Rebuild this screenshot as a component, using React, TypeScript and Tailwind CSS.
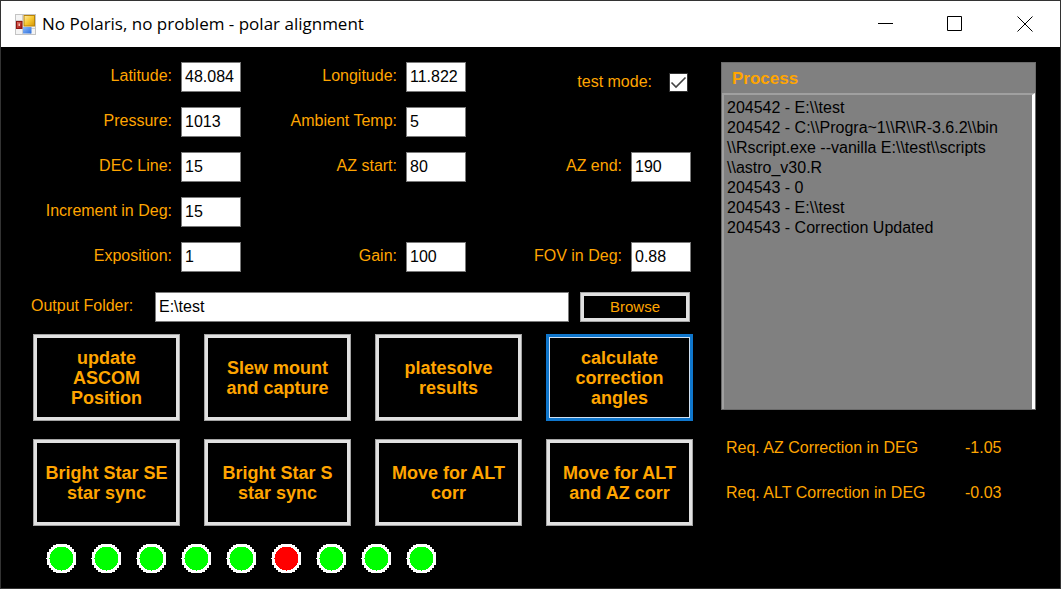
import { type ReactNode } from "react";

const LOG = [
  String.raw`204542 - E:\\test`,
  String.raw`204542 - C:\\Progra~1\\R\\R-3.6.2\\bin`,
  String.raw`\\Rscript.exe --vanilla E:\\test\\scripts`,
  String.raw`\\astro_v30.R`,
  "204543 - 0",
  String.raw`204543 - E:\\test`,
  "204543 - Correction Updated",
].join("\n");

const STATUS = ["ok", "ok", "ok", "ok", "ok", "fail", "ok", "ok", "ok"];

const ACTIONS = [
  "update ASCOM Position",
  "Slew mount and capture",
  "platesolve results",
  "calculate correction angles",
  "Bright Star SE star sync",
  "Bright Star S star sync",
  "Move for ALT corr",
  "Move for ALT and AZ corr",
];

function AppIcon() {
  return (
    <svg width="21" height="21" viewBox="0 0 21 21" aria-hidden="true">
      <defs>
        <linearGradient id="gold" x1="0" y1="0" x2="1" y2="1">
          <stop offset="0" stopColor="#ffe89a" />
          <stop offset="0.5" stopColor="#f7c832" />
          <stop offset="1" stopColor="#d99a08" />
        </linearGradient>
        <linearGradient id="ruby" x1="0" y1="0" x2="1" y2="1">
          <stop offset="0" stopColor="#e06a5c" />
          <stop offset="1" stopColor="#a01210" />
        </linearGradient>
        <linearGradient id="azure" x1="0" y1="0" x2="1" y2="1">
          <stop offset="0" stopColor="#8dbcfb" />
          <stop offset="1" stopColor="#2c6ddb" />
        </linearGradient>
      </defs>
      <rect x="0.5" y="0.5" width="20" height="20" fill="#f4f4f4" stroke="#c4c4c4" />
      <path d="M7.5 1v19M1 6.5h7M1 14.5h19M15.5 14v6" stroke="#cfcfcf" />
      <rect x="8.5" y="1" width="11.5" height="11.5" fill="#b98408" />
      <rect x="9.5" y="2" width="9.5" height="9.5" fill="url(#gold)" />
      <rect x="1" y="7" width="6.5" height="8" fill="#8f1512" />
      <rect x="2" y="8" width="4.5" height="6" fill="url(#ruby)" />
      <rect x="3.5" y="9.5" width="1.5" height="2.5" fill="#f4c0b8" />
      <rect x="8" y="13" width="8.5" height="6.5" fill="url(#azure)" />
    </svg>
  );
}

function TitleButton({ label, children }: { label: string; children: ReactNode }) {
  return (
    <button type="button" aria-label={label} className="flex w-[70px] items-center justify-center hover:bg-gray-200">
      <svg width="16" height="16" viewBox="0 0 16 16" fill="none" stroke="#000" aria-hidden="true">
        {children}
      </svg>
    </button>
  );
}

function TitleBar() {
  return (
    <header className="flex h-[46px] items-stretch bg-white text-black">
      <div className="flex flex-1 items-center gap-1.5 pl-3.5">
        <AppIcon />
        <h1 className="font-['Open_Sans','Noto_Sans',sans-serif] text-[17px] leading-6 whitespace-nowrap">
          No Polaris, no problem - polar alignment
        </h1>
      </div>
      <TitleButton label="Minimize">
        <path d="M1 7.5h15" />
      </TitleButton>
      <TitleButton label="Maximize">
        <path d="M0.5 0.5h14v14h-14z" />
      </TitleButton>
      <TitleButton label="Close">
        <path d="M0.5 0.5l15 15M15.5 0.5l-15 15" />
      </TitleButton>
    </header>
  );
}

const BOX = "h-[30px] border border-[#7a7a7a] bg-white px-[3px] text-black outline-none";

function Field({ id, label, value, start }: { id: string; label: string; value: string; start?: boolean }) {
  return (
    <div className={`flex items-center justify-end gap-[9px] ${start ? "col-start-1" : ""}`}>
      <label htmlFor={id} className="pb-0.5 whitespace-nowrap">
        {label}
      </label>
      <input id={id} type="text" defaultValue={value} className={`w-[60px] ${BOX}`} />
    </div>
  );
}

function TestMode() {
  return (
    <div className="flex items-end justify-end gap-[17px] pr-[3px]">
      <label htmlFor="test-mode">test mode:</label>
      <span className="relative size-[19px]">
        <input
          id="test-mode"
          type="checkbox"
          defaultChecked
          className="peer block size-[19px] appearance-none border border-[#333] bg-white"
        />
        <svg
          viewBox="0 0 19 19"
          className="pointer-events-none absolute inset-0 hidden size-[19px] peer-checked:block"
          fill="none"
          stroke="#444"
          strokeWidth="1.6"
          aria-hidden="true"
        >
          <path d="M2.5 9.5l4.5 4.5L16.5 4.5" />
        </svg>
      </span>
    </div>
  );
}

function ActionButton({ label }: { label: string }) {
  const active = label.startsWith("calculate");
  return (
    <button
      type="button"
      className={
        active
          ? "h-[87px] border-3 border-[#0f76cc] bg-black px-1.5 text-[18px] leading-5 font-bold inset-ring-1 inset-ring-[#cfe0f2]"
          : "h-[87px] border border-[#a3a3a3] bg-black px-2 text-[18px] leading-5 font-bold inset-ring-3 inset-ring-[#e1e1e1]"
      }
    >
      {label}
    </button>
  );
}

function Led({ state }: { state: string }) {
  return (
    <li>
      <svg width="30" height="30" viewBox="0 0 30 30" shapeRendering="crispEdges" role="img" aria-label={state}>
        <path d="M0 14h3v1H0z" fill="#fff" />
        <path
          d="M10 0h11v1h3v2h2v2h2v3h2v13h-2v3h-2v2h-2v2h-3v1H10v-1H7v-2H5v-2H3v-3H1V8h2V5h2V3h2V1h3z"
          fill="#fff"
        />
        <circle cx="15.5" cy="14.5" r="12" fill={state === "ok" ? "#00ff00" : "#ff0000"} />
      </svg>
    </li>
  );
}

export default function App() {
  return (
    <div className="flex min-h-screen flex-col border border-[#333] bg-black font-['Liberation_Sans',Arial,sans-serif] text-[16px] leading-5 text-[#ffa500]">
      <TitleBar />
      <main className="flex flex-1 items-start gap-7 pt-[15px] pr-6 pl-[15px]">
        <section className="flex-1">
          <div className="grid grid-cols-3 gap-y-[15px] pr-[2px]">
            <Field id="latitude" label="Latitude:" value="48.084" />
            <Field id="longitude" label="Longitude:" value="11.822" />
            <TestMode />
            <Field id="pressure" label="Pressure:" value="1013" />
            <Field id="ambient" label="Ambient Temp:" value="5" />
            <Field id="dec" label="DEC Line:" value="15" start />
            <Field id="az-start" label="AZ start:" value="80" />
            <Field id="az-end" label="AZ end:" value="190" />
            <Field id="increment" label="Increment in Deg:" value="15" start />
            <Field id="exposition" label="Exposition:" value="1" start />
            <Field id="gain" label="Gain:" value="100" />
            <Field id="fov" label="FOV in Deg:" value="0.88" />
          </div>

          <div className="mt-5 flex items-center pr-[3px] pl-[15px]">
            <label htmlFor="folder" className="w-[124px] pb-0.5 whitespace-nowrap">
              Output Folder:
            </label>
            <input id="folder" type="text" defaultValue="E:\test" className={`min-w-0 flex-1 ${BOX}`} />
            <button
              type="button"
              className="ml-[11px] h-[30px] w-[110px] border border-[#a3a3a3] bg-black text-[15px] inset-ring-3 inset-ring-[#e1e1e1]"
            >
              Browse
            </button>
          </div>

          <div className="mt-3 grid grid-cols-4 gap-x-6 gap-y-[18px] pl-[17px]">
            {ACTIONS.map((label) => (
              <ActionButton key={label} label={label} />
            ))}
          </div>

          <ul className="mt-[18px] flex gap-[15px] pb-3.5 pl-[30px]">
            {STATUS.map((state, i) => (
              <Led key={i} state={state} />
            ))}
          </ul>
        </section>

        <aside className="w-[315px]">
          <div className="border border-[#6a6a6a] bg-[#808080]">
            <label htmlFor="log" className="block h-[30px] px-2.5 pt-1.5 text-[17px] font-bold">
              Process
            </label>
            <textarea
              id="log"
              readOnly
              wrap="off"
              defaultValue={LOG}
              className="block h-[316px] w-full resize-none overflow-hidden border-t-2 border-r-3 border-l-2 border-t-[#a0a0a0] border-r-white border-l-[#a0a0a0] bg-[#808080] px-[3px] pt-[3px] text-black outline-none"
            />
          </div>
          <dl className="mt-7 grid grid-cols-[239px_1fr] gap-y-[25px] pl-[5px]">
            <dt>Req. AZ Correction in DEG</dt>
            <dd>-1.05</dd>
            <dt>Req. ALT Correction in DEG</dt>
            <dd>-0.03</dd>
          </dl>
        </aside>
      </main>
    </div>
  );
}
